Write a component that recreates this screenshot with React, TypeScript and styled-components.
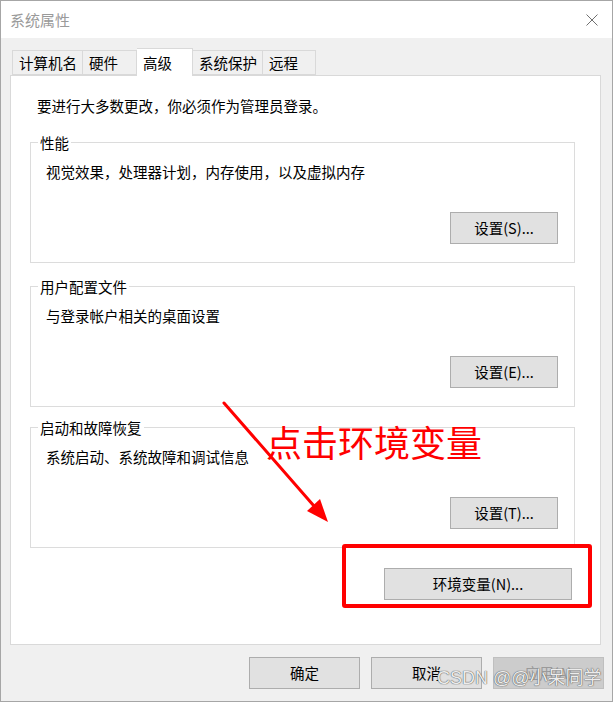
import React from "react";
import styled, { createGlobalStyle } from "styled-components";

const Global = createGlobalStyle`
  html, body { margin: 0; padding: 0; background: #ffffff; }
  * { box-sizing: border-box; }
`;

const FONT = `"Noto Sans CJK SC", "Noto Sans", sans-serif`;

const Window = styled.div`
  position: relative;
  width: 613px;
  height: 702px;
  border: 1px solid #a6a6a6;
  background: #f0f0f0;
  font-family: ${FONT};
  font-size: 14.5px;
  color: #000;
  display: flex;
  flex-direction: column;
`;

const TitleBar = styled.div`
  height: 37px;
  background: #ffffff;
  display: flex;
  align-items: center;
  justify-content: space-between;
  padding: 0 14px 0 9px;
`;

const Title = styled.span`
  font-size: 15px;
  color: #9a9a9a;
  line-height: 20px;
  margin-top: 1px;
`;

const CloseIcon = styled.svg`
  width: 12px;
  height: 12px;
`;

const Body = styled.div`
  flex: 1;
  display: flex;
  flex-direction: column;
  padding: 10px 0 0 0;
`;

const TabRow = styled.div`
  display: flex;
  align-items: flex-end;
  height: 27px;
  padding-left: 11px;
`;

const Tab = styled.div<{ $active?: boolean; $w: number }>`
  width: ${(p) => p.$w}px;
  height: ${(p) => (p.$active ? 28 : 25)}px;
  margin-bottom: ${(p) => (p.$active ? -1 : 0)}px;
  padding-left: 6px;
  display: flex;
  align-items: center;
  background: ${(p) => (p.$active ? "#ffffff" : "#f0f0f0")};
  border: 1px solid #d9d9d9;
  border-bottom: ${(p) => (p.$active ? "none" : "1px solid #d9d9d9")};
  position: relative;
  z-index: ${(p) => (p.$active ? 2 : 0)};
  line-height: 20px;
  white-space: nowrap;
  & + & { border-left: ${(p) => (p.$active ? "1px solid #d9d9d9" : "none")}; }
`;

const Panel = styled.div`
  position: relative;
  margin-left: 9px;
  width: 591px;
  height: 570px;
  background: #ffffff;
  border: 1px solid #d9d9d9;
  padding: 20px 0 0 0;
  display: flex;
  flex-direction: column;
`;

const Notice = styled.div`
  line-height: 20px;
  padding-left: 26px;
`;

const Group = styled.div<{ $mt: number }>`
  margin: ${(p) => p.$mt}px 25px 0 19px;
  height: 121px;
  border: 1px solid #dcdcdc;
  display: flex;
  flex-direction: column;
  padding: 0 16px 0 15px;
`;

const Legend = styled.div`
  margin: -10px 0 0 -8px;
  padding: 0 2px;
  align-self: flex-start;
  background: #ffffff;
  line-height: 20px;
`;

const Desc = styled.div`
  margin-top: 9px;
  line-height: 20px;
`;

const Button = styled.button<{ $w: number; $disabled?: boolean }>`
  width: ${(p) => p.$w}px;
  height: 32px;
  background: ${(p) => (p.$disabled ? "#cccccc" : "#e1e1e1")};
  border: 1px solid ${(p) => (p.$disabled ? "#bfbfbf" : "#adadad")};
  color: ${(p) => (p.$disabled ? "#9a9a9a" : "#000000")};
  font-family: ${FONT};
  font-size: 14.5px;
  line-height: 20px;
  padding: 0;
  margin: 0;
  border-radius: 0;
  display: flex;
  align-items: center;
  justify-content: center;
`;

const GroupButton = styled(Button)`
  align-self: flex-end;
  margin-top: 30px;
`;

const EnvButton = styled(Button)`
  align-self: flex-end;
  margin: 20px 28px 0 0;
`;

const Footer = styled.div`
  display: flex;
  justify-content: flex-end;
  gap: 11px;
  padding: 12px 8px 0 0;
`;

const Highlight = styled.div`
  position: absolute;
  left: 331px;
  top: 468px;
  width: 250px;
  height: 64px;
  border: 4px solid #ff0000;
  border-radius: 3px;
`;

const Annotation = styled.div`
  position: absolute;
  left: 255px;
  top: 345px;
  font-family: ${FONT};
  font-size: 36px;
  line-height: 40px;
  color: #ff0000;
  white-space: nowrap;
`;

const ArrowSvg = styled.svg`
  position: absolute;
  left: 0;
  top: 0;
  width: 589px;
  height: 568px;
  pointer-events: none;
`;

const Watermark = styled.div`
  position: absolute;
  left: 436px;
  top: 666px;
  font-family: "Liberation Sans", "Noto Sans CJK SC", sans-serif;
  font-size: 18px;
  line-height: 22px;
  color: #ececec;
  text-shadow: 0 0 1px #555555, 0 0 1px #555555;
  white-space: nowrap;
`;

const tabs = [
  { label: "计算机名", w: 71 },
  { label: "硬件", w: 54 },
  { label: "高级", w: 56, active: true },
  { label: "系统保护", w: 70 },
  { label: "远程", w: 53 },
];

const groups = [
  { title: "性能", desc: "视觉效果，处理器计划，内存使用，以及虚拟内存", btn: "设置(S)...", mt: 26 },
  { title: "用户配置文件", desc: "与登录帐户相关的桌面设置", btn: "设置(E)...", mt: 23 },
  { title: "启动和故障恢复", desc: "系统启动、系统故障和调试信息", btn: "设置(T)...", mt: 20 },
];

export default function App() {
  return (
    <>
      <Global />
      <Window>
        <TitleBar>
          <Title>系统属性</Title>
          <CloseIcon viewBox="0 0 12 12">
            <path d="M0.5 0.5 L11.5 11.5 M11.5 0.5 L0.5 11.5" stroke="#707070" strokeWidth="1" fill="none" />
          </CloseIcon>
        </TitleBar>
        <Body>
          <TabRow>
            {tabs.map((t) => (
              <Tab key={t.label} $w={t.w} $active={t.active}>
                {t.label}
              </Tab>
            ))}
          </TabRow>
          <Panel>
            <Notice>要进行大多数更改，你必须作为管理员登录。</Notice>
            {groups.map((g) => (
              <Group key={g.title} $mt={g.mt}>
                <Legend>{g.title}</Legend>
                <Desc>{g.desc}</Desc>
                <GroupButton $w={108}>{g.btn}</GroupButton>
              </Group>
            ))}
            <EnvButton $w={188}>环境变量(N)...</EnvButton>
            <Highlight />
            <Annotation>点击环境变量</Annotation>
            <ArrowSvg viewBox="0 0 589 568">
              <line x1="213" y1="327" x2="303" y2="430" stroke="#ff0000" strokeWidth="3" strokeLinecap="round" />
              <polygon points="317,446 296,435 309,423" fill="#ff0000" />
            </ArrowSvg>
          </Panel>
          <Footer>
            <Button $w={111}>确定</Button>
            <Button $w={111}>取消</Button>
            <Button $w={111} $disabled>应用(A)</Button>
          </Footer>
        </Body>
        <Watermark>CSDN @@小呆同学</Watermark>
      </Window>
    </>
  );
}
